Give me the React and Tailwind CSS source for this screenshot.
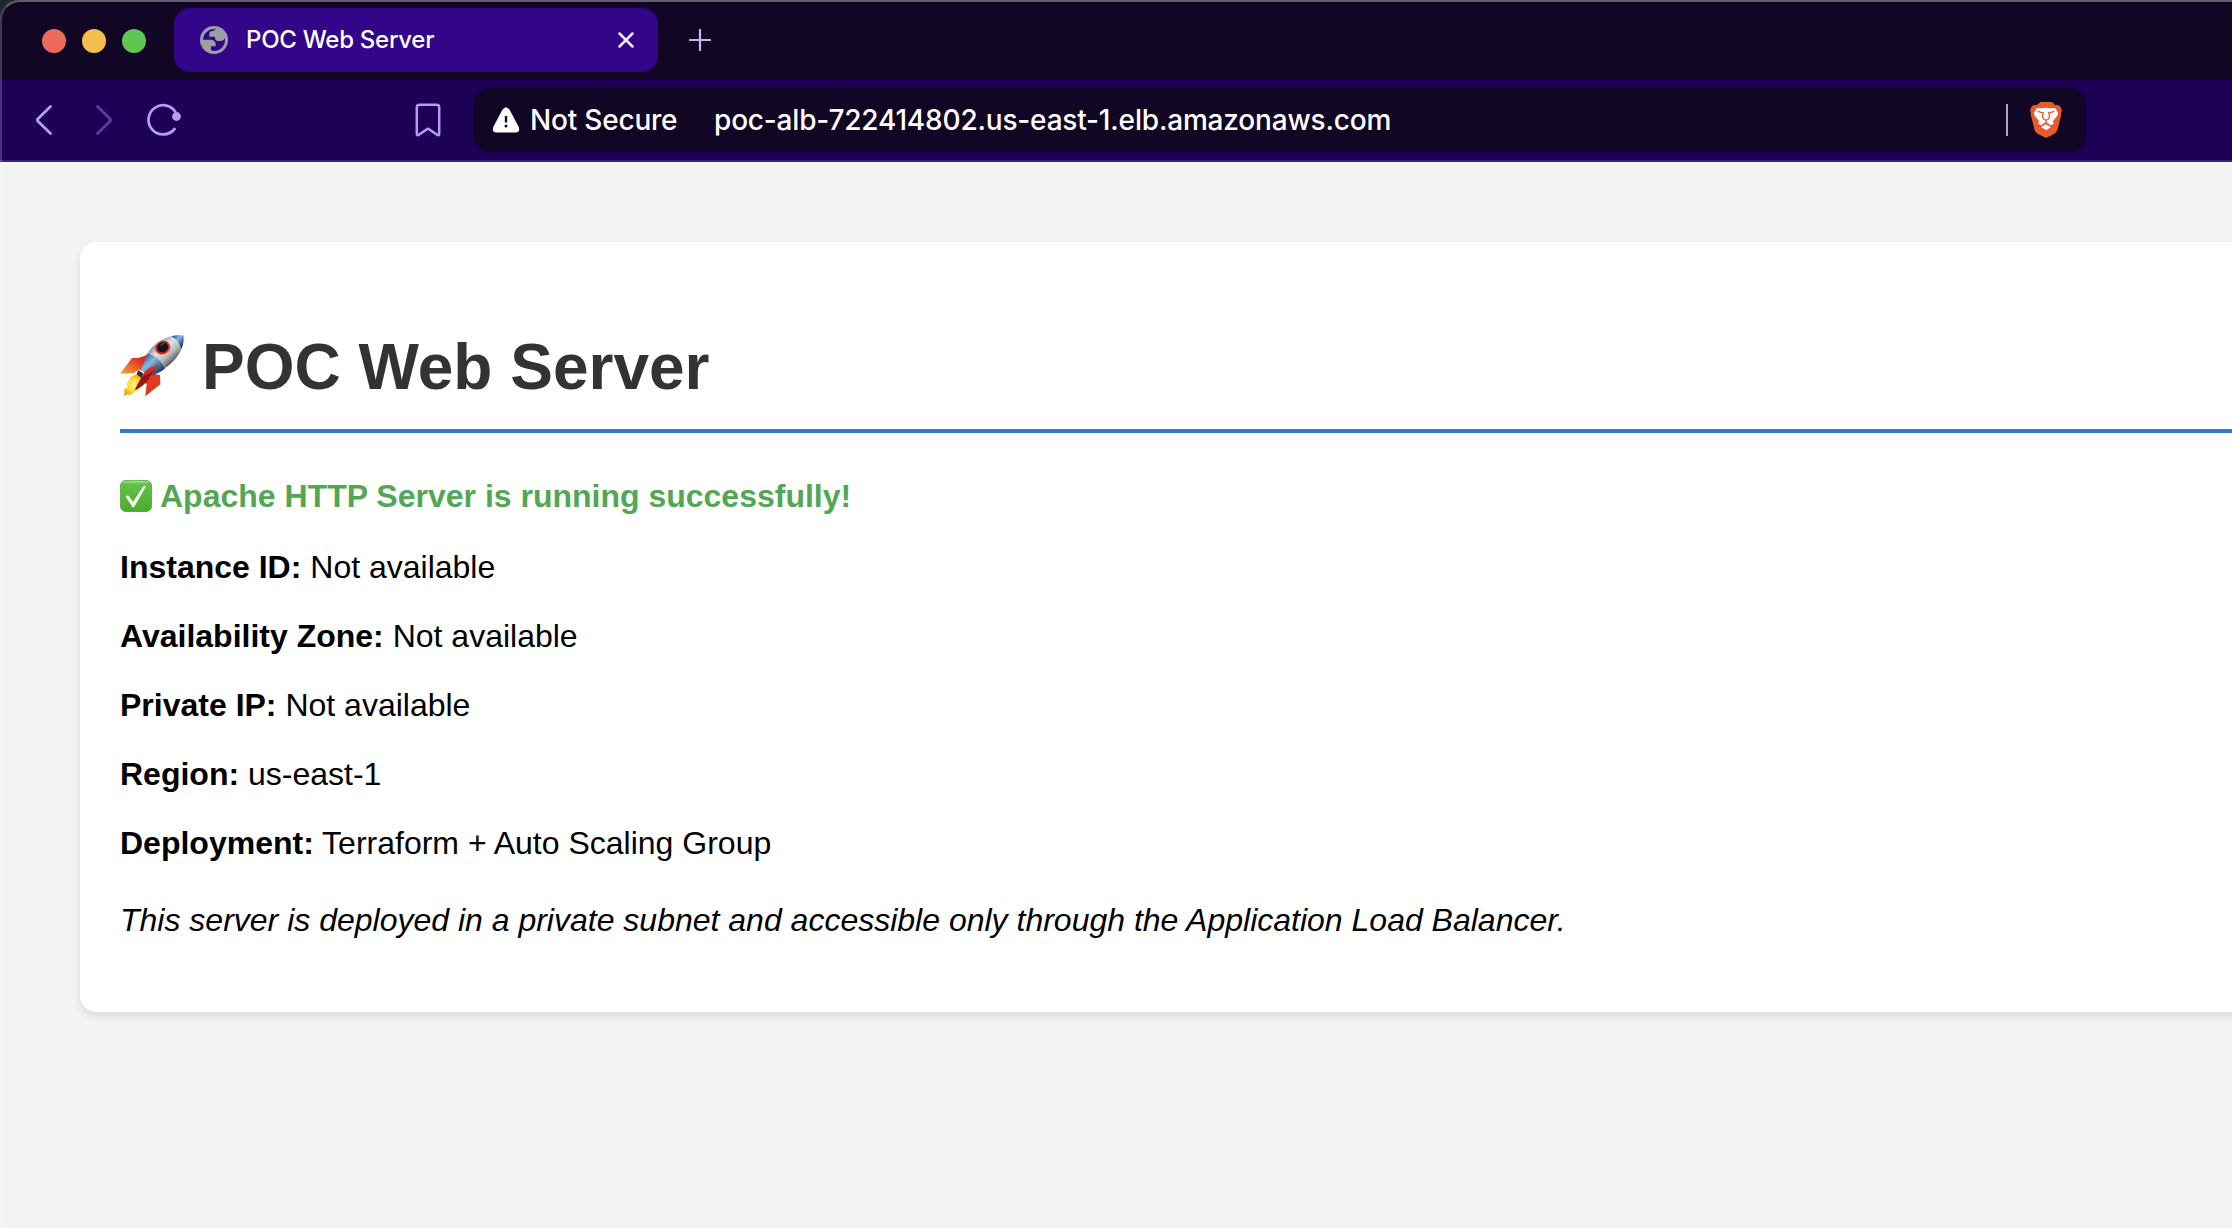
function Globe() {
  return (
    <svg className="size-7 shrink-0" viewBox="0 0 84 84">
      <circle cx="42" cy="42" r="42" fill="#9aa0a6" />
      <path
        fill="#330589"
        d="M47 9C27 6 10 22 9 41h24c8 0 14 5 14 12v8H33v12c22 7 42-9 42-31l-1-6c-2 6-6 9-12 9H53c-5 0-8-4-8-9v-4H28v-8c0-5 4-9 9-9h2c4 0 5-2 5-5 0-2 1-4 3-5z"
      />
    </svg>
  );
}

function Brave() {
  return (
    <svg className="ml-[22px] h-9 w-8 shrink-0" viewBox="0 0 96 108">
      <path
        fill="#e8592b"
        d="M31 0h35l10 10c7-2 13 0 16 6l4 9-3 7 1 5-11 44c-2 7-5 11-11 15L48 108 24 96c-6-4-9-8-11-15L2 37l1-5-3-7 4-9c3-6 9-8 16-6z"
      />
      <path
        fill="#fff"
        d="M21 18l13 1 14-2 14 2 13-1 9 14-2 9-13 16 2 8-11 6-12-10-12 10-11-6 2-8-13-16-2-9z"
      />
      <path fill="#fff" d="M48 67l15 8-15 10-15-10z" />
      <path
        fill="none"
        stroke="#e8592b"
        strokeWidth="4"
        strokeLinejoin="round"
        d="M23 28l13 4h4l-3 12 4 7 7 4 7-4 4-7-3-12h4l13-4M48 55v7M34 72l14-10 14 10"
      />
    </svg>
  );
}

function Rocket() {
  return (
    <svg className="mr-[18px] h-[62px] w-16 shrink-0" viewBox="0 0 192 186">
      <defs>
        <linearGradient id="hull" x1="0" y1="0" x2="1" y2="1">
          <stop offset="0.2" stopColor="#6d7a80" />
          <stop offset="0.42" stopColor="#e4e6e2" />
          <stop offset="0.6" stopColor="#b5b9b7" />
          <stop offset="0.82" stopColor="#343a3d" />
        </linearGradient>
        <linearGradient id="band" x1="0" y1="0" x2="1" y2="1">
          <stop offset="0.15" stopColor="#315f9c" />
          <stop offset="0.4" stopColor="#8db8e5" />
          <stop offset="0.8" stopColor="#173f73" />
        </linearGradient>
        <linearGradient id="fin" x1="1" y1="0" x2="0" y2="1">
          <stop offset="0.3" stopColor="#dc2f1d" />
          <stop offset="1" stopColor="#ffac40" />
        </linearGradient>
        <radialGradient id="flame">
          <stop offset="0" stopColor="#fff58a" />
          <stop offset="0.6" stopColor="#ffdc35" />
          <stop offset="1" stopColor="#f59a1b" />
        </radialGradient>
      </defs>
      <path fill="url(#fin)" d="M84 56c-18 12-32 14-48 13L0 116l42-2 14-10 8 4z" />
      <path fill="#e23a20" d="M120 120l1 28-45 36 4-36-6-6 24-26z" />
      <path fill="url(#flame)" d="M50 118l-18 8-12 22 3 8-12 10 4 4-5 14 13-6 8 2 14-10 10-4 9-22 10-10z" />
      <path fill="url(#hull)" d="M190 2c5 31-14 69-54 97L80 58C101 25 144-5 190 2z" />
      <path fill="url(#band)" d="M154 4c15-4 27-4 36-2 2 13 0 26-6 40-5-17-14-29-30-38z" />
      <path fill="url(#band)" d="M84 54c24 9 40 23 52 45-16 15-35 22-48 24L62 104z" />
      <path fill="none" stroke="#e4cc68" strokeWidth="2" d="M84 54c24 9 40 23 52 45" />
      <path fill="#99150f" d="M114 91c-25 6-50 27-70 75 25-11 40-28 50-47z" />
      <path fill="#d6281b" d="M114 91c-24 5-39 15-47 32 17-3 33-13 47-32z" />
      <path fill="#293039" d="M54 106l16 9-5 15-15-12z" />
      <ellipse cx="128" cy="38" rx="23" ry="20" fill="#d92823" transform="rotate(-28 128 38)" />
      <ellipse cx="128" cy="37" rx="17" ry="15" fill="#11151c" transform="rotate(-28 128 37)" />
      <path fill="#596071" d="M119 35c3-9 11-13 18-9-8 0-13 4-18 9z" />
    </svg>
  );
}

function Check() {
  return (
    <svg className="mr-2 size-8 shrink-0" viewBox="0 0 96 96">
      <defs>
        <linearGradient id="tile" x1="0" y1="0" x2="0" y2="1">
          <stop offset="0" stopColor="#7bc96a" />
          <stop offset="0.15" stopColor="#62c243" />
          <stop offset="1" stopColor="#4caa2c" />
        </linearGradient>
      </defs>
      <rect x="1" y="1" width="94" height="94" rx="18" fill="url(#tile)" stroke="#43952c" strokeWidth="2" />
      <path d="M12 7Q48 2 84 7" fill="none" stroke="#a0dc90" strokeWidth="4" strokeLinecap="round" />
      <path fill="#fff" d="M17 50q6-6 10-1l12 17 30-46q3-4 9-1L43 80q-3 3-6 0z" />
    </svg>
  );
}

const details = [
  ["Instance ID:", "Not available"],
  ["Availability Zone:", "Not available"],
  ["Private IP:", "Not available"],
  ["Region:", "us-east-1"],
  ["Deployment:", "Terraform + Auto Scaling Group"],
];

export default function App() {
  return (
    <div className="h-[1228px] w-[2232px] overflow-hidden bg-[#1b282c]">
      <div className="relative h-full overflow-hidden rounded-tl-[20px] bg-[#f3f3f3]">
        <header className="font-['Inter',sans-serif] text-white">
          <div className="flex h-20 items-start bg-[#110624] pt-2">
            <div className="mt-[21px] ml-[42px] flex gap-4">
              <span className="size-6 rounded-full bg-[#ed6a5f]" />
              <span className="size-6 rounded-full bg-[#f5bf4f]" />
              <span className="size-6 rounded-full bg-[#61c554]" />
            </div>
            <div className="ml-7 flex h-16 w-[484px] items-center rounded-2xl bg-[#330589] pr-[23px] pl-[26px]">
              <Globe />
              <span className="ml-[18px] flex-1 text-[24px] leading-8 font-medium tracking-[-0.27px] whitespace-nowrap">POC Web Server</span>
              <svg className="size-[18px]" viewBox="0 0 18 18" fill="none" stroke="#f3edff" strokeWidth="2.5" strokeLinecap="round">
                <path d="M2.5 2.5l13 13M15.5 2.5l-13 13" />
              </svg>
            </div>
            <svg className="mt-[21px] ml-[31px] size-[22px]" viewBox="0 0 22 22" fill="none" stroke="#c5b5f5" strokeWidth="2.2" strokeLinecap="round">
              <path d="M11 1v20M1 11h20" />
            </svg>
          </div>
          <div className="flex h-[82px] items-start border-b-2 border-[#3d207a] bg-[#1e0056] pt-2">
            <svg className="mt-4 ml-[35px] h-8 w-[18px]" viewBox="0 0 18 32" fill="none" stroke="#b39cf5" strokeWidth="2.8" strokeLinecap="round" strokeLinejoin="round">
              <path d="M15.5 2.500L3 14.800q-1.300 1.200 0 2.400L15.500 29.500" />
            </svg>
            <svg className="mt-4 ml-[42px] h-8 w-[18px]" viewBox="0 0 18 32" fill="none" stroke="#5d3c9f" strokeWidth="2.8" strokeLinecap="round" strokeLinejoin="round">
              <path d="M2.500 2.500L15 14.800q1.300 1.200 0 2.400L2.500 29.500" />
            </svg>
            <svg className="mt-[13px] ml-[34px] h-9 w-9" viewBox="0 0 36 36" fill="none" stroke="#b39cf5" strokeWidth="2.8" strokeLinecap="round">
              <path d="M29.500 13A14.600 14.600 0 1 0 27.500 28" />
              <circle cx="29.500" cy="15.500" r="4.400" fill="#b39cf5" stroke="none" />
            </svg>
            <svg className="mt-3.5 ml-[231px] h-[36px] w-[28px]" viewBox="0 0 28 36" fill="none" stroke="#b39cf5" strokeWidth="2.5" strokeLinejoin="round">
              <path d="M5.300 2.700h17.400q2.500 0 2.500 2.500v26.500q0 2.500-2.100 1.100L15.400 27.400q-1.400-1-2.800 0L4.900 32.800q-2.100 1.400-2.100-1.100V5.200q0-2.500 2.500-2.500z" />
            </svg>
            <div className="ml-8 flex h-16 w-[1612px] items-center rounded-2xl bg-[#110624] pr-6 pl-[18px]">
              <svg className="h-[26px] w-7" viewBox="0 0 28 26">
                <path fill="#fff" d="M10.400 2.800q3.600-5.200 7.200 0l9 17q2 5.200-3 5.700H4.400q-5-.500-3-5.700z" />
                <path d="M14 9v6.500" stroke="#110624" strokeWidth="2.400" />
                <circle cx="14" cy="19" r="1.500" fill="#110624" />
              </svg>
              <span className="ml-2.5 w-[184px] text-[28px] leading-9 font-medium tracking-[-0.2px] whitespace-nowrap">Not Secure</span>
              <span className="flex-1 text-[28px] leading-9 font-medium tracking-[-0.18px] whitespace-nowrap">poc-alb-722414802.us-east-1.elb.amazonaws.com</span>
              <span className="h-8 w-0.5 bg-[#aaa9af]" />
              <Brave />
            </div>
          </div>
        </header>
        <main className="pt-20 pl-20 font-['Liberation_Sans',Arial,sans-serif] text-[32px] leading-[37px] text-black">
          <section className="-mr-10 h-[770px] rounded-l-2xl bg-white pt-[83px] pl-10 shadow-[0_4px_8px_rgba(0,0,0,0.1)]">
            <h1 className="flex h-[108px] items-start border-b-4 border-[#3577c8] text-[64px] leading-[84px] font-bold text-[#333]">
              <span className="pt-[10px]"><Rocket /></span>
              POC Web Server
            </h1>
            <p className="mt-[45px] flex items-start font-bold text-[#53a653]">
              <span className="pt-0.5"><Check /></span>
              Apache HTTP Server is running successfully!
            </p>
            <div className="mt-[34px] flex flex-col gap-8">
              {details.map(([label, value]) => (
                <p key={label}><strong>{label}</strong> {value}</p>
              ))}
            </div>
            <p className="mt-10 italic">This server is deployed in a private subnet and accessible only through the Application Load Balancer.</p>
          </section>
        </main>
        <div className="pointer-events-none absolute inset-0 rounded-tl-[20px] border-t-2 border-l-2 border-t-[#655c70] border-l-white/20" />
      </div>
    </div>
  );
}
